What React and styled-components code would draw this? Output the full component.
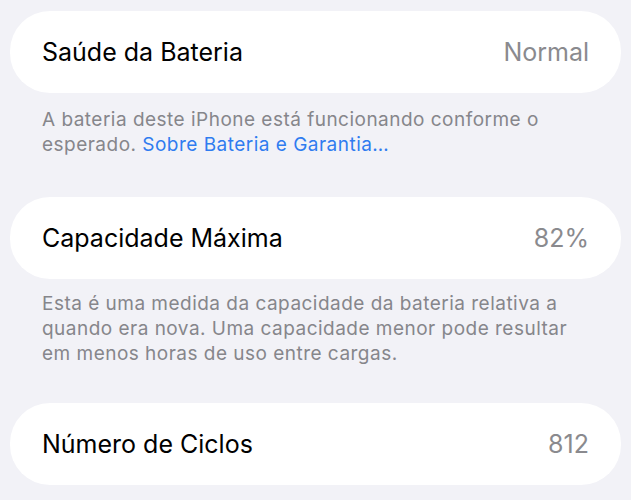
import React from "react";
import styled, { createGlobalStyle } from "styled-components";

const Global = createGlobalStyle`
  html, body { margin: 0; padding: 0; background: #f2f2f7; }
  body { font-family: Inter, "Noto Sans", sans-serif; -webkit-font-smoothing: antialiased; }
`;

const Page = styled.div`
  width: 631px;
  min-height: 500px;
  box-sizing: border-box;
  padding: 11px 10px 0;
  background: #f2f2f7;
`;

const Section = styled.section`
  display: flex;
  flex-direction: column;
  margin-bottom: ${(p) => p.$gap}px;
`;

const Card = styled.div`
  height: 82px;
  box-sizing: border-box;
  padding: 0 32px;
  background: #ffffff;
  border-radius: 40px;
  display: flex;
  align-items: center;
  justify-content: space-between;
`;

const Label = styled.span`
  font-size: 25px;
  color: #000000;
  letter-spacing: 0px;
`;

const Value = styled.span`
  font-size: 25px;
  color: #8a8a8e;
  letter-spacing: 0px;
`;

const Footer = styled.p`
  margin: ${(p) => p.$top}px 0 0;
  padding: 0 32px;
  font-size: 19px;
  line-height: 25px;
  color: #86868b;
  letter-spacing: 0.48px;
`;

const Link = styled.a`
  color: #2f7cf0;
  text-decoration: none;
`;

export default function App() {
  return (
    <>
      <Global />
      <Page>
        <Section $gap={40}>
          <Card>
            <Label>Saúde da Bateria</Label>
            <Value>Normal</Value>
          </Card>
          <Footer $top={14}>
            A bateria deste iPhone está funcionando conforme o esperado.{" "}
            <Link>Sobre Bateria e Garantia…</Link>
          </Footer>
        </Section>
        <Section $gap={37}>
          <Card>
            <Label>Capacidade Máxima</Label>
            <Value>82%</Value>
          </Card>
          <Footer $top={12}>
            Esta é uma medida da capacidade da bateria relativa a quando era
            nova. Uma capacidade menor pode resultar em menos horas de uso
            entre cargas.
          </Footer>
        </Section>
        <Section $gap={0}>
          <Card>
            <Label>Número de Ciclos</Label>
            <Value>812</Value>
          </Card>
        </Section>
      </Page>
    </>
  );
}
